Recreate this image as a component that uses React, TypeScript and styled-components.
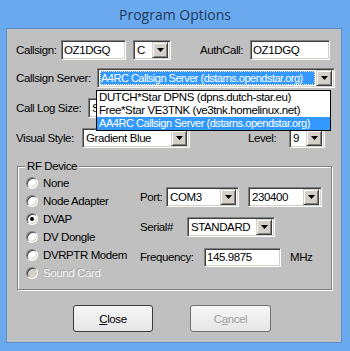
import styled, { createGlobalStyle } from 'styled-components'

const GlobalStyle = createGlobalStyle`
  html, body { margin: 0; padding: 0; }
  body { width: 350px; height: 351px; overflow: hidden; background: #6aa9ee; }
  * { box-sizing: border-box; }
`

const Window = styled.div`
  width: 350px;
  height: 351px;
  background: #6aa9ee;
  display: flex;
  flex-direction: column;
  font-family: "Liberation Sans", Arial, sans-serif;
  font-size: 11.5px;
  letter-spacing: -0.4px;
  color: #000;
`

const TitleBar = styled.div`
  height: 28px;
  display: flex;
  align-items: center;
  justify-content: center;
  font-family: "Open Sans", "Noto Sans", sans-serif;
  font-size: 14px;
  letter-spacing: 0;
  color: #1d3a58;
`

const Client = styled.div`
  position: relative;
  margin: 0 8px 0 6px;
  height: 315px;
  background: #c0c0c0;
  border: 1px solid #5a8dcc;
  padding: 0 6px 0 9px;
  display: flex;
  flex-direction: column;
`

const Row = styled.div<{ $top: number }>`
  display: flex;
  align-items: center;
  height: 20px;
  margin-top: ${p => p.$top}px;
`

const Label = styled.span<{ $w?: number; $ml?: number }>`
  flex: none;
  width: ${p => (p.$w ? `${p.$w}px` : 'auto')};
  margin-left: ${p => p.$ml ?? 0}px;
  white-space: nowrap;
`

const Sunken = styled.div<{ $w: number; $ml?: number; $h?: number }>`
  flex: none;
  width: ${p => p.$w}px;
  height: ${p => p.$h ?? 20}px;
  margin-left: ${p => p.$ml ?? 0}px;
  background: #fff;
  border: 1px solid;
  border-color: #808080 #fff #fff #808080;
  box-shadow: inset 1px 1px 0 #404040, inset -1px -1px 0 #d4d0c8;
  display: flex;
  align-items: center;
  padding: 2px;
  white-space: nowrap;
  overflow: hidden;
`

const FieldText = styled.span<{ $sel?: boolean }>`
  flex: 1;
  min-width: 0;
  height: 100%;
  display: flex;
  align-items: center;
  padding-left: 1px;
  overflow: hidden;
  background: ${p => (p.$sel ? '#3399ff' : 'transparent')};
  color: ${p => (p.$sel ? '#fff' : '#000')};
  outline: ${p => (p.$sel ? '1px dotted #ffe9a0' : 'none')};
  outline-offset: -1px;
  margin-right: ${p => (p.$sel ? 1 : 0)}px;
  font-size: ${p => (p.$sel ? '11px' : 'inherit')};
  letter-spacing: ${p => (p.$sel ? '-0.5px' : 'inherit')};
`

const ArrowButton = styled.span`
  flex: none;
  width: 16px;
  height: 16px;
  background: #d4d0c8;
  border: 1px solid;
  border-color: #d4d0c8 #404040 #404040 #d4d0c8;
  box-shadow: inset 1px 1px 0 #fff, inset -1px -1px 0 #808080;
  display: flex;
  align-items: center;
  justify-content: center;
`

function Arrow() {
  return (
    <ArrowButton>
      <svg width="7" height="4" viewBox="0 0 7 4">
        <path d="M0 0h7L3.5 4z" fill="#000" />
      </svg>
    </ArrowButton>
  )
}

function Combo({ w, value, ml, sel }: { w: number; value: string; ml?: number; sel?: boolean }) {
  return (
    <Sunken $w={w} $ml={ml}>
      <FieldText $sel={sel}>{value}</FieldText>
      <Arrow />
    </Sunken>
  )
}

const DropList = styled.div`
  position: absolute;
  left: 89px;
  top: 61px;
  width: 235px;
  background: #fff;
  border: 1px solid #000;
  z-index: 2;
`

const ListItem = styled.div<{ $sel?: boolean }>`
  height: 13px;
  line-height: 13px;
  padding-left: 2px;
  white-space: nowrap;
  background: ${p => (p.$sel ? '#3399ff' : '#fff')};
  color: ${p => (p.$sel ? '#fff' : '#000')};
  font-size: ${p => (p.$sel ? '11px' : 'inherit')};
  letter-spacing: ${p => (p.$sel ? '-0.45px' : 'inherit')};
`

const GroupBox = styled.div`
  position: relative;
  margin: 18px 0 0 1px;
  width: 315px;
  height: 124px;
  border: 1px solid #808080;
  box-shadow: 1px 1px 0 #fff, inset 1px 1px 0 #fff;
  display: flex;
  padding: 7px 0 0 8px;
`

const GroupTitle = styled.span`
  position: absolute;
  top: -8px;
  left: 7px;
  padding: 0 2px;
  background: #c0c0c0;
  line-height: 14px;
`

const RadioColumn = styled.div`
  width: 114px;
  display: flex;
  flex-direction: column;
`

const RadioRow = styled.label<{ $disabled?: boolean }>`
  height: 18px;
  display: flex;
  align-items: center;
  gap: 5px;
  white-space: nowrap;
  color: ${p => (p.$disabled ? '#f4f4f4' : '#000')};
  text-shadow: ${p => (p.$disabled ? '-1px -1px 0 #a4a4a4' : 'none')};
`

const RadioDot = styled.span<{ $checked?: boolean; $disabled?: boolean }>`
  position: relative;
  flex: none;
  width: 12px;
  height: 12px;
  border-radius: 50%;
  background: ${p => (p.$disabled ? '#d4d0c8' : '#fff')};
  border: 1px solid;
  border-color: #808080 #fff #fff #808080;
  box-shadow: inset 1px 1px 0 #404040, inset -1px -1px 0 #d4d0c8;
  &::after {
    content: '';
    display: ${p => (p.$checked ? 'block' : 'none')};
    position: absolute;
    left: 3px;
    top: 3px;
    width: 4px;
    height: 4px;
    border-radius: 50%;
    background: #000;
  }
`

const RightColumn = styled.div`
  display: flex;
  flex-direction: column;
  gap: 10px;
  padding-top: 13px;
`

const ButtonRow = styled.div`
  display: flex;
  gap: 37px;
  margin: 15px 0 0 57px;
`

const Button = styled.button<{ $default?: boolean; $w: number }>`
  width: ${p => p.$w}px;
  height: 27px;
  padding: 0;
  border: 1px solid ${p => (p.$default ? '#3c3c3c' : '#707070')};
  border-radius: 3px;
  background: linear-gradient(#f6f6f6, #e6e6e6);
  font-family: "Liberation Sans", Arial, sans-serif;
  font-size: 11.5px;
  letter-spacing: -0.4px;
  color: ${p => (p.$default ? '#000' : '#a0a0a0')};
`

const radios = [
  { name: 'None' },
  { name: 'Node Adapter' },
  { name: 'DVAP', checked: true },
  { name: 'DV Dongle' },
  { name: 'DVRPTR Modem' },
  { name: 'Sound Card', disabled: true },
]

export default function App() {
  return (
    <Window>
      <GlobalStyle />
      <TitleBar>Program Options</TitleBar>
      <Client>
        <Row $top={11}>
          <Label $w={45}>Callsign:</Label>
          <Sunken $w={65}>OZ1DGQ</Sunken>
          <Combo w={38} ml={7} value="C" />
          <Label $ml={29}>AuthCall:</Label>
          <Sunken $w={80} $ml={7}>OZ1DGQ</Sunken>
        </Row>
        <Row $top={8}>
          <Label $w={81}>Callsign Server:</Label>
          <Combo w={238} sel value="A4RC Callsign Server (dstarns.opendstar.org)" />
        </Row>
        <Row $top={10}>
          <Label $w={72}>Call Log Size:</Label>
          <Combo w={100} value="Small" />
        </Row>
        <Row $top={10}>
          <Label $w={66}>Visual Style:</Label>
          <Combo w={108} value="Gradient Blue" />
          <Label $w={41} $ml={58}>Level:</Label>
          <Combo w={36} value="9" />
        </Row>
        <GroupBox>
          <GroupTitle>RF Device</GroupTitle>
          <RadioColumn>
            {radios.map(r => (
              <RadioRow key={r.name} $disabled={r.disabled}>
                <RadioDot $checked={r.checked} $disabled={r.disabled} />
                {r.name}
              </RadioRow>
            ))}
          </RadioColumn>
          <RightColumn>
            <Row $top={0}>
              <Label $w={26}>Port:</Label>
              <Combo w={73} value="COM3" />
              <Combo w={74} ml={9} value="230400" />
            </Row>
            <Row $top={0}>
              <Label $w={47}>Serial#</Label>
              <Combo w={88} value="STANDARD" />
            </Row>
            <Row $top={0}>
              <Label $w={64}>Frequency:</Label>
              <Sunken $w={77} $h={19}>145.9875</Sunken>
              <Label $ml={9}>MHz</Label>
            </Row>
          </RightColumn>
        </GroupBox>
        <ButtonRow>
          <Button $default $w={80}><u>C</u>lose</Button>
          <Button $w={81} disabled>C<u>a</u>ncel</Button>
        </ButtonRow>
        <DropList>
          <ListItem>DUTCH*Star DPNS (dpns.dutch-star.eu)</ListItem>
          <ListItem>Free*Star VE3TNK (ve3tnk.homelinux.net)</ListItem>
          <ListItem $sel>AA4RC Callsign Server (dstarns.opendstar.org)</ListItem>
        </DropList>
      </Client>
    </Window>
  )
}
